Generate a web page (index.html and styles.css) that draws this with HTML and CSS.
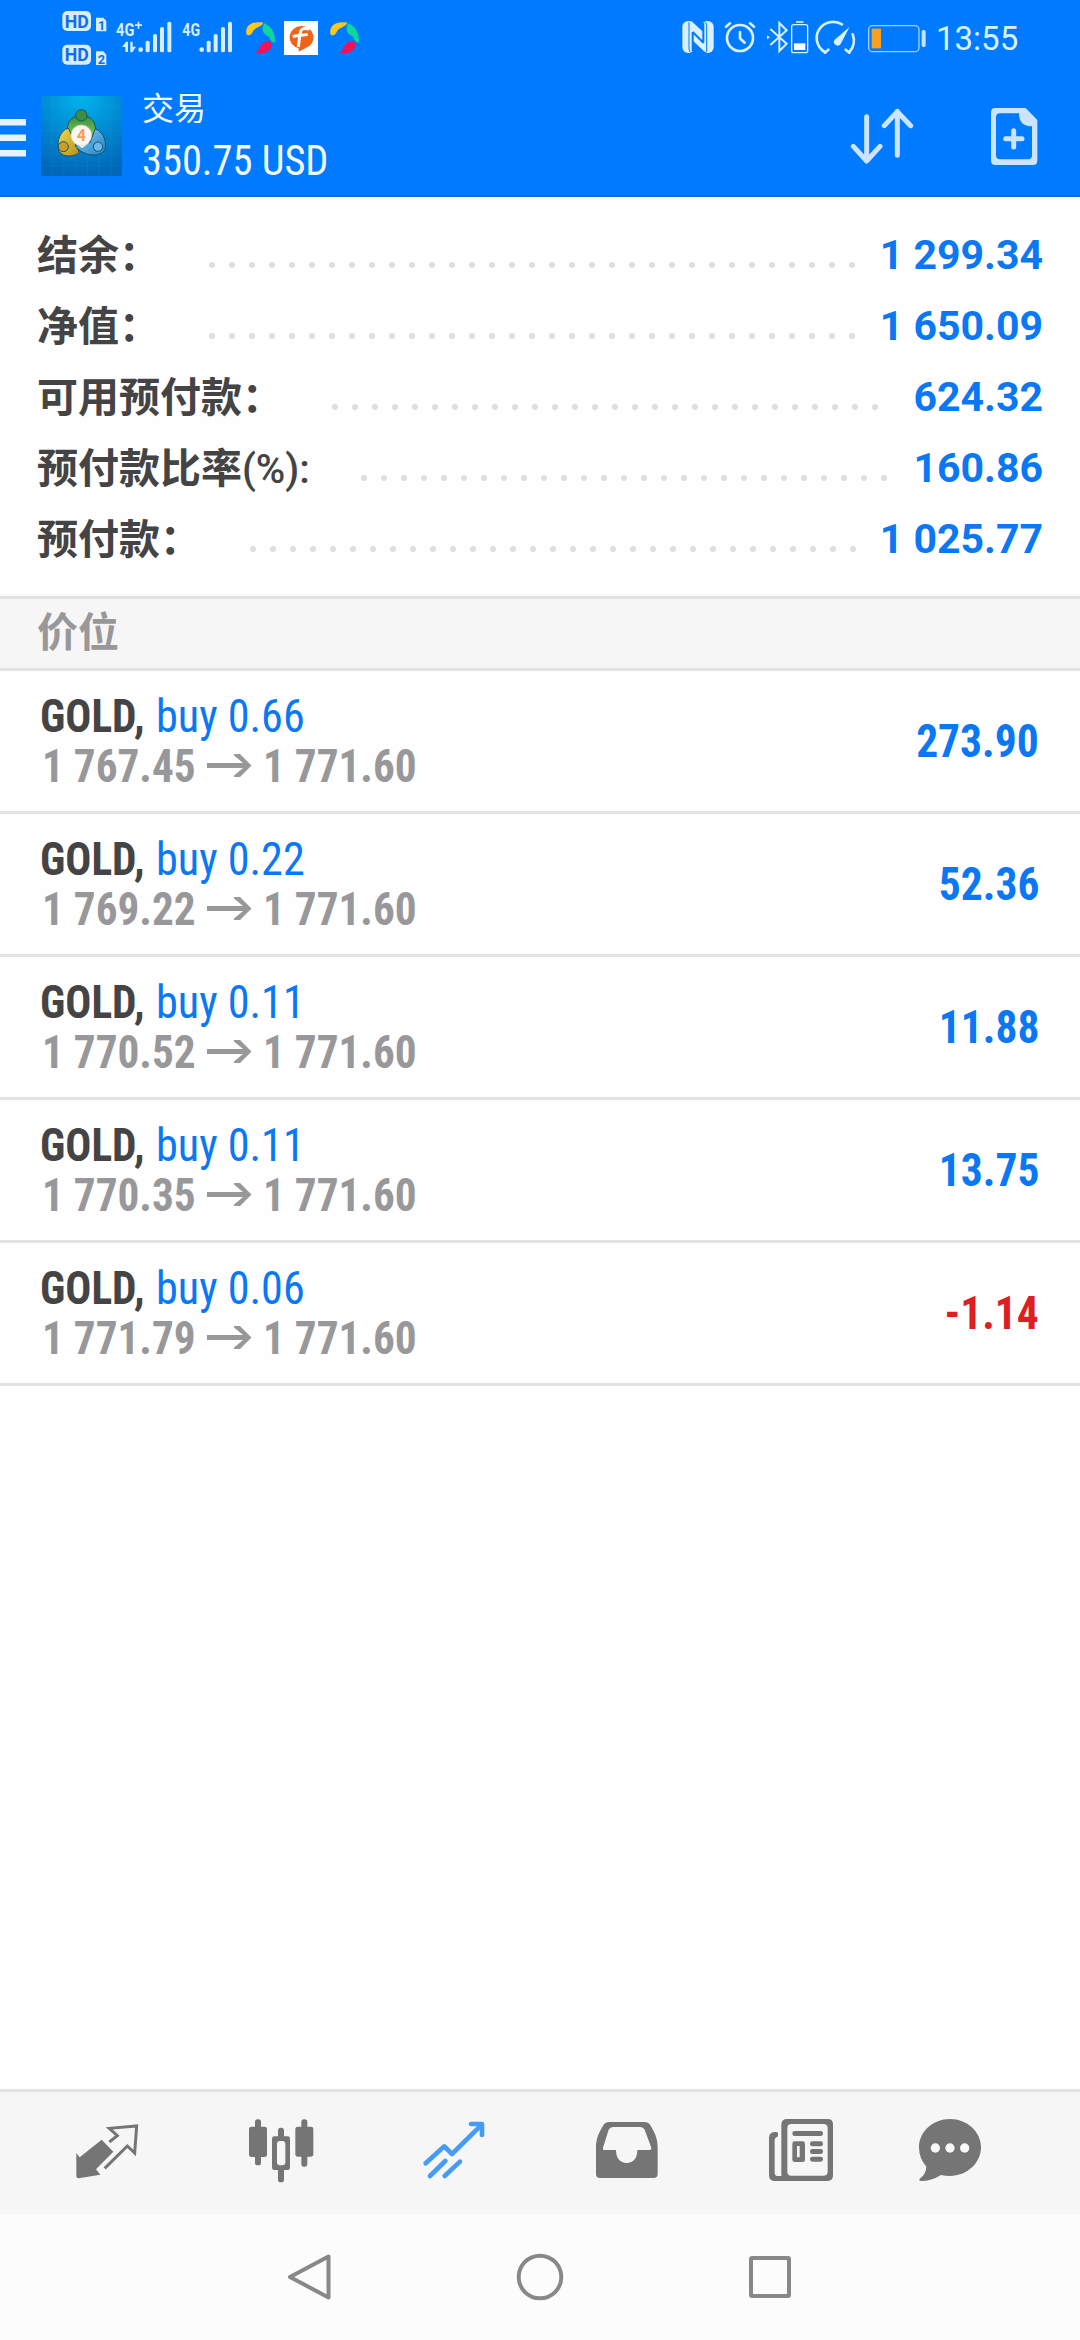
FILE: index.html
```html
<!DOCTYPE html>
<html lang="zh-CN">
<head>
<meta charset="utf-8">
<title>交易</title>
<link rel="stylesheet" href="styles.css">
</head>
<body>
<svg class="defs" width="0" height="0">
  <symbol id="arrow" viewBox="0 0 45 25"><path d="M0 10h36L27 2.500V1h6l11.500 11.500L33 24h-6v-1.500L36 15H0z" fill="#98989a"/></symbol>
</svg>
<div class="screen">
  <header class="top">
    <div class="status">
      <div class="status-group">
        <svg width="52" height="75" viewBox="180 0 156 225">
          <g fill="#d9ecff"><rect x="187" y="33" width="86" height="60" rx="15"/><path d="M288 53h22l9 10v31h-31z"/><rect x="187" y="134" width="86" height="60" rx="15"/><path d="M288 154h22l9 10v31h-31z"/></g>
          <g fill="#0a6ff0" font-family="Roboto" font-weight="700"><text x="194" y="83" font-size="57" textLength="72" lengthAdjust="spacingAndGlyphs">HD</text><text x="194" y="184" font-size="57" textLength="72" lengthAdjust="spacingAndGlyphs">HD</text><text x="294" y="90" font-size="38">1</text><text x="293" y="191" font-size="38">2</text></g>
        </svg>
        <svg width="66" height="75" viewBox="336 0 198 225">
          <g fill="#d9ecff"><text x="348" y="107" font-family="Roboto" font-weight="700" font-size="57" textLength="55" lengthAdjust="spacingAndGlyphs">4G</text><path d="M413 65h5v8h8v5h-8v8h-5v-8h-8v-5h8z"/><path d="M366 141l12-16h6v31h-8v-15zM391 125h7v15h10l-11 17h-6z"/><circle cx="422" cy="149" r="7"/><rect x="437" y="122" width="12" height="35" rx="5"/><rect x="459" y="102" width="12" height="55" rx="5"/><rect x="480" y="81" width="12" height="76" rx="5"/><rect x="502" y="65" width="12" height="92" rx="5"/></g>
        </svg>
        <svg width="61" height="75" viewBox="534 0 183 225">
          <g fill="#d9ecff"><text x="547" y="107" font-family="Roboto" font-weight="700" font-size="57" textLength="53" lengthAdjust="spacingAndGlyphs">4G</text><circle cx="605" cy="149" r="7"/><rect x="620" y="122" width="12" height="35" rx="5"/><rect x="641" y="102" width="12" height="55" rx="5"/><rect x="663" y="81" width="12" height="76" rx="5"/><rect x="684" y="65" width="12" height="92" rx="5"/></g>
        </svg>
        <svg width="42" height="75" viewBox="717 0 126 225">
          <path d="M739 101C735 76 758 62 790 68C783 84 764 79 757 98C752 107 742 108 739 101z" fill="#fbc81c"/><path d="M793 70C815 80 826 99 825 126C819 129 811 123 809 113C804 105 789 104 788 89C787 81 790 76 793 70z" fill="#0fd69d"/><path d="M765 159C778 155 775 138 790 128C803 120 817 125 816 136C812 156 785 166 765 159z" fill="#f2125b"/>
        </svg>
        <svg width="42" height="75" viewBox="843 0 126 225">
          <path fill="#fff" d="M852 63h102v102H852z"/><path d="M904 78a36 34 0 0 1 13 66l-21 11v-10a36 34 0 0 1 8-67z" fill="#f0641a"/><path d="M929 87c-20-5-27 0-29 15l-5 39M878 110c17-6 29-3 45-7" fill="none" stroke="#fff" stroke-width="9"/>
        </svg>
        <svg width="42" height="75" viewBox="969 0 126 225">
          <g transform="translate(252)"><path d="M739 101C735 76 758 62 790 68C783 84 764 79 757 98C752 107 742 108 739 101z" fill="#fbc81c"/><path d="M793 70C815 80 826 99 825 126C819 129 811 123 809 113C804 105 789 104 788 89C787 81 790 76 793 70z" fill="#0fd69d"/><path d="M765 159C778 155 775 138 790 128C803 120 817 125 816 136C812 156 785 166 765 159z" fill="#f2125b"/></g>
        </svg>
      </div>
      <div class="status-group status-right">
        <svg width="42" height="75" viewBox="48 0 126 225">
          <rect x="64" y="63" width="94" height="96" rx="17" fill="#d9f0ff"/>
          <path d="M84 62l42 37V68l5-6zM138 160l-43-39v33l-6 6z" fill="#007aff"/>
          <path d="M84 66v82q1 8 8 11M137 156V74q-1-8-8-11" fill="none" stroke="#007aff" stroke-width="3"/>
          <path d="M84 64h8l38 35v33L96 96v26l38 36" fill="#d9f0ff"/>
          <path d="M95 96v58M127 68v58M95 96l33 33" fill="none" stroke="#007aff" stroke-width="6"/>
        </svg>
        <svg width="42" height="75" viewBox="174 0 126 225">
          <g fill="none" stroke="#d9f0ff" stroke-width="8" stroke-linecap="round"><circle cx="237" cy="114" r="39"/><path d="M237 96v19l14 13M195 80l12-10M279 80l-12-10"/></g>
        </svg>
        <svg width="52" height="75" viewBox="300 0 156 225">
          <g fill="none" stroke="#d9f0ff" stroke-width="6"><path d="M328 87l49 44-22 22V69l22 22-49 44"/><path d="M318 106v12l9-6z" fill="#d9f0ff" stroke="none"/><rect x="392" y="74" width="48" height="84" rx="6" stroke-width="4"/><path d="M405 66h22" stroke-width="5"/><path d="M399 130h34v20h-34z" fill="#fff" stroke="none"/></g>
        </svg>
        <svg width="48" height="75" viewBox="456 0 144 225">
          <g fill="none" stroke="#d9f0ff" stroke-width="8" stroke-linecap="round"><path d="M492 158l10-9M492 156l-9-5M490 155A48 47 0 0 1 543 73M565 158l-11-9M565 156A50 50 0 0 0 575 103"/></g><path d="M566 80l-27 52a11 11 0 1 1-18-13z" fill="#d9f0ff"/>
        </svg>
        <svg width="70" height="75" viewBox="600 0 210 225">
          <rect x="623" y="77" width="151" height="78" rx="12" fill="none" stroke="#9fd0ff" stroke-width="4"/><path d="M632 86h28v59h-28z" fill="#f9a01f"/><rect x="782" y="90" width="12" height="51" rx="5" fill="#c5e3ff"/>
        </svg>
        <span class="clock">13:55</span>
      </div>
    </div>
    <div class="bar">
      <svg class="burger" width="26" height="38" viewBox="0 0 26 38"><path fill="#e6f3ff" d="M0 0h26v6.500H0zM0 15.500h26V22H0zM0 31h26v6.500H0z"/></svg>
      <svg class="logo" width="81" height="80" viewBox="123 288 243 240">
        <defs>
          <radialGradient id="sky" cx=".5" cy="0" r="1"><stop offset="0" stop-color="#00b5ee"/><stop offset=".55" stop-color="#0086cf"/><stop offset="1" stop-color="#0066b8"/></radialGradient>
          <linearGradient id="gr" x1="0" y1="0" x2="0" y2="1"><stop offset="0" stop-color="#2f8f3a"/><stop offset="1" stop-color="#8cc95a"/></linearGradient>
          <linearGradient id="ye" x1="0" y1="0" x2="1" y2="1"><stop offset="0" stop-color="#eedb55"/><stop offset="1" stop-color="#b98f10"/></linearGradient>
          <linearGradient id="bl" x1="0" y1="0" x2="1" y2="1"><stop offset="0" stop-color="#8fd2f7"/><stop offset="1" stop-color="#1c7fc4"/></linearGradient>
        </defs>
        <path fill="url(#sky)" d="M123 288h243v240H123z"/>
        <path d="M157 288v240M192 288v240M227 288v240M262 288v240M297 288v240M332 288v240M123 322h243M123 357h243M123 392h243M123 427h243M123 462h243M123 497h243" stroke="#3cb4ea" stroke-opacity=".18" stroke-width="2"/>
        <g stroke="#17526b" stroke-width="3">
          <path d="M203 392c-4-28 15-46 42-46s46 20 40 50l-12 16h-58z" fill="url(#gr)"/><circle cx="244" cy="346" r="17" fill="#3b8f3e"/>
          <path d="M205 384c-25 8-34 38-30 62 5 26 42 28 63 12l-12-30z" fill="url(#ye)"/><circle cx="190" cy="440" r="15" fill="#c9a024"/>
          <path d="M286 386c27 12 34 40 29 62-10 24-64 25-90-12l45-8z" fill="url(#bl)"/><circle cx="294" cy="440" r="14" fill="#69b8ea"/>
        </g>
        <path d="M226 428l20 16 22-16z" fill="#fff"/>
        <circle cx="244" cy="406" r="31" fill="#fbf6f2" stroke="#d7d5ca" stroke-width="2"/>
        <text x="244" y="423" font-family="Roboto" font-size="48" font-weight="700" text-anchor="middle" fill="#f3a056">4</text>
      </svg>
      <div class="title"><div class="title-name">交易</div><div class="title-sum"><span class="cond">350.75 USD</span></div></div>
      <svg class="sort" width="64" height="60" viewBox="570 320 192 180"><path d="M620 349v132M580 438l40 44 40-44M712 465V333M673 376l39-42 40 42" fill="none" stroke="#cce4ff" stroke-width="15" stroke-linecap="round" stroke-linejoin="round"/></svg>
      <svg class="add" width="48" height="60" viewBox="990 320 144 180"><path d="M1006 323h91l35 36v122q0 13-13 13h-113q-13 0-13-13V336q0-13 13-13zM1020 339q-12 0-12 12v114q0 12 12 12h84q12 0 12-12v-87q-40-1-39-39z" fill="#cce4ff" fill-rule="evenodd"/><path d="M1061 391v49M1037 415h49" stroke="#cce4ff" stroke-width="15" stroke-linecap="round"/></svg>
    </div>
  </header>

  <section class="summary">
    <div class="sum-row"><span class="sum-label">结余：</span><i class="dots d1"></i><span class="sum-value">1 299.34</span></div>
    <div class="sum-row"><span class="sum-label">净值：</span><i class="dots d1"></i><span class="sum-value">1 650.09</span></div>
    <div class="sum-row"><span class="sum-label">可用预付款：</span><i class="dots d3"></i><span class="sum-value">624.32</span></div>
    <div class="sum-row"><span class="sum-label">预付款比率<span class="pct">(%):</span></span><i class="dots d4"></i><span class="sum-value">160.86</span></div>
    <div class="sum-row"><span class="sum-label">预付款：</span><i class="dots d5"></i><span class="sum-value">1 025.77</span></div>
  </section>

  <h2 class="section-head">价位</h2>

  <main class="positions">
    <div class="pos"><div class="pos-info"><div class="pos-line"><b class="sym">GOLD,</b><span class="side">buy 0.66</span></div><div class="pos-line price"><span class="from">1 767.45</span><svg class="arrow" width="45" height="25"><use href="#arrow"/></svg><span class="to">1 771.60</span></div></div><div class="profit">273.90</div></div>
    <div class="pos"><div class="pos-info"><div class="pos-line"><b class="sym">GOLD,</b><span class="side">buy 0.22</span></div><div class="pos-line price"><span class="from">1 769.22</span><svg class="arrow" width="45" height="25"><use href="#arrow"/></svg><span class="to">1 771.60</span></div></div><div class="profit">52.36</div></div>
    <div class="pos"><div class="pos-info"><div class="pos-line"><b class="sym">GOLD,</b><span class="side">buy 0.11</span></div><div class="pos-line price"><span class="from">1 770.52</span><svg class="arrow" width="45" height="25"><use href="#arrow"/></svg><span class="to">1 771.60</span></div></div><div class="profit">11.88</div></div>
    <div class="pos"><div class="pos-info"><div class="pos-line"><b class="sym">GOLD,</b><span class="side">buy 0.11</span></div><div class="pos-line price"><span class="from">1 770.35</span><svg class="arrow" width="45" height="25"><use href="#arrow"/></svg><span class="to">1 771.60</span></div></div><div class="profit">13.75</div></div>
    <div class="pos"><div class="pos-info"><div class="pos-line"><b class="sym">GOLD,</b><span class="side">buy 0.06</span></div><div class="pos-line price"><span class="from">1 771.79</span><svg class="arrow" width="45" height="25"><use href="#arrow"/></svg><span class="to">1 771.60</span></div></div><div class="profit loss">-1.14</div></div>
  </main>

  <nav class="tabs">
    <svg viewBox="82 99 240 240"><path d="M186 179l35 36-52 53 13 16-65 11q-7 0-7-7v-69l10 13z" fill="#757575"/><path d="M209 186l24-19-24-22 82-7-6 81-22-21-68 67" fill="none" stroke="#757575" stroke-width="9"/></svg>
    <svg viewBox="600 99 240 240"><g fill="#757575"><rect x="642" y="118" width="18" height="138" rx="8"/><rect x="624" y="140" width="54" height="91" rx="7"/><rect x="781" y="118" width="18" height="142" rx="8"/><rect x="763" y="140" width="54" height="90" rx="7"/><rect x="711" y="143" width="18" height="164" rx="8"/><rect x="693" y="169" width="54" height="101" rx="7"/></g><rect x="708" y="183" width="25" height="73" rx="9" fill="#f6f6f6"/></svg>
    <svg viewBox="1120 99 240 240"><g fill="none" stroke="#459cf6" stroke-width="14" stroke-linecap="round" stroke-linejoin="round"><path d="M1155 250l56-51 23 23 87-86M1291 132h33v33M1168 288l46-45M1212 288l46-43"/></g></svg>
    <svg viewBox="81 99 240 240"><path d="M148 126h105q12 0 18 10c12 20 22 38 22 66v80q0 12-12 12H120q-12 0-12-12v-80c0-28 10-46 22-66q6-10 18-10zM159 141q-9 0-13 8l-17 54q-2 7 5 7h34c0 24 12 39 32 39s32-15 32-39h37q6 0 5-7l-20-54q-4-8-13-8z" fill="#757575" fill-rule="evenodd"/></svg>
    <svg viewBox="604 99 240 240"><g fill="#757575"><path d="M684 117h120q16 0 16 16v153q0 17-16 17H646q-18 0-18-18V174q0-17 16-18h8q4 1 3 13l-4 3q-6 2-6 8v100q0 7 6 8h14V134q0-17 17-17zM695 132q-12 0-12 12v131q0 12 12 12h96q13 0 13-12V144q0-12-13-12z" fill-rule="evenodd"/><rect x="698" y="153" width="92" height="15" rx="7"/><rect x="751" y="184" width="39" height="15" rx="7"/><rect x="751" y="207" width="39" height="15" rx="7"/><rect x="751" y="230" width="39" height="15" rx="7"/><path d="M705 184h24q7 0 7 7v48q0 7-7 7h-24q-7 0-7-7v-48q0-7 7-7zM712 198v34h8v-34z" fill-rule="evenodd"/></g></svg>
    <svg viewBox="1047 99 240 240"><path d="M1167 117c51 0 93 38 93 85s-42 86-93 86q-15 0-27-3-28 18-61 18-8-3-1-8 17-13 18-35-22-25-22-58c0-47 42-85 93-85z" fill="#757575"/><g fill="#f8f8f8"><circle cx="1123" cy="204" r="14"/><circle cx="1167" cy="204" r="14"/><circle cx="1211" cy="204" r="14"/></g></svg>
  </nav>

  <footer class="sysnav">
    <svg width="50" height="50" viewBox="0 0 50 50"><path d="M42.500 4.500v41L4 25z"/></svg>
    <svg width="50" height="50" viewBox="0 0 50 50"><circle cx="25" cy="25" r="21.300"/></svg>
    <svg width="50" height="50" viewBox="0 0 50 50"><rect x="6" y="6" width="38" height="38" rx="1"/></svg>
  </footer>
</div>
</body>
</html>
```
FILE: styles.css
```css
* { box-sizing: border-box; }
body { margin: 0; background: #fefefe; font-family: Roboto, "Noto Sans CJK SC", sans-serif; }
svg { display: block; flex: none; }
.screen { width: 1080px; height: 2340px; display: flex; flex-direction: column; overflow: hidden; }

.top { height: 197px; background: #007aff; border-bottom: 2px solid #1268d4; flex: none; }
.status { height: 75px; display: flex; justify-content: space-between; padding: 0 0 0 60px; }
.status-group { display: flex; }
.status-right { width: 404px; }
.status-right { width: 403px; }
.clock { padding-left: 5px; line-height: 77px; font-size: 33px; color: #d9f0ff; white-space: nowrap; }
.bar { height: 120px; display: flex; align-items: flex-start; }
.burger { margin-top: 44px; }
.logo { margin: 21px 0 0 15px; }
.title { margin-left: 20px; width: 706px; color: #f2f9ff; }
.title-name { margin-top: 14px; font-size: 32px; line-height: 40px; }
.title-sum { margin-top: 9px; font-size: 43px; line-height: 44px; white-space: nowrap; }
.sort { margin: 32px 0 0 2px; }
.add { margin: 32px 0 0 76px; }

.summary { height: 399px; padding: 22px 37px 0; flex: none; }
.sum-row { height: 71px; display: flex; align-items: center; color: #444; font-weight: 700; }
.sum-label { font-size: 41px; white-space: nowrap; width: 0; flex: none; overflow: visible; font-family: "Noto Sans CJK SC", sans-serif; padding-bottom: 5px; }
.pct { font-family: Roboto, sans-serif; font-weight: 500; font-size: 40px; }
.dots { height: 6px; margin-top: 20px; flex: none; background: radial-gradient(circle at 10px 3px, #dfdfdf 2.700px, transparent 3.400px) 0 0 / 20px 6px repeat-x; }
.d1 { width: 660px; margin-left: 165px; }
.d3 { width: 560px; margin-left: 288px; }
.d4 { width: 540px; margin-left: 317px; }
.d5 { width: 620px; margin-left: 206px; }
.sum-value { margin-left: auto; font-size: 41px; color: #0a78f4; white-space: nowrap; }

.section-head { margin: 0; height: 75px; flex: none; border-top: 3px solid #e3e3e3; border-bottom: 3px solid #e3e3e3; background: #f6f6f6; padding-left: 37px; font-size: 41px; line-height: 61px; font-weight: 700; color: #98989a; font-family: "Noto Sans CJK SC", sans-serif; }

.positions { flex: 1; }
.pos { height: 143px; border-bottom: 3px solid #e3e3e3; display: flex; justify-content: space-between; padding: 20px 41px 0 40px; font-family: "Roboto Condensed", Roboto, sans-serif; font-stretch: condensed; }
.pos-line { display: flex; height: 50px; line-height: 50px; font-size: 46px; white-space: nowrap; }
.sym, .side, .from, .to, .cond { transform: scaleX(.94); transform-origin: left; }
.sym { color: #444; width: 116px; }
.side { color: #0a78f4; transform: scaleX(.96); }
.price { color: #98989a; font-weight: 700; }
.from { width: 165px; margin-left: 2px; }
.arrow { margin-top: 12px; }
.to { margin-left: 11px; }
.profit { font-size: 46px; font-weight: 700; color: #0a78f4; line-height: 100px; transform: scaleX(.945); transform-origin: right; }
.loss { color: #dc1f22; }
.cond { display: inline-block; font-family: "Roboto Condensed", Roboto, sans-serif; font-stretch: condensed; }

.tabs { height: 125px; flex: none; border-top: 3px solid #e3e3e3; background: #f6f6f6; display: grid; grid-template-columns: repeat(5, 173.400px) 124px; padding-left: 20.600px; align-items: center; justify-items: center; }
.tabs svg { width: 80px; height: 80px; }
.sysnav { height: 126px; flex: none; background: #fcfcfc; display: flex; justify-content: center; align-items: center; gap: 179.500px; }
.sysnav svg { fill: none; stroke: #888; stroke-width: 4; stroke-linejoin: round; }
```
